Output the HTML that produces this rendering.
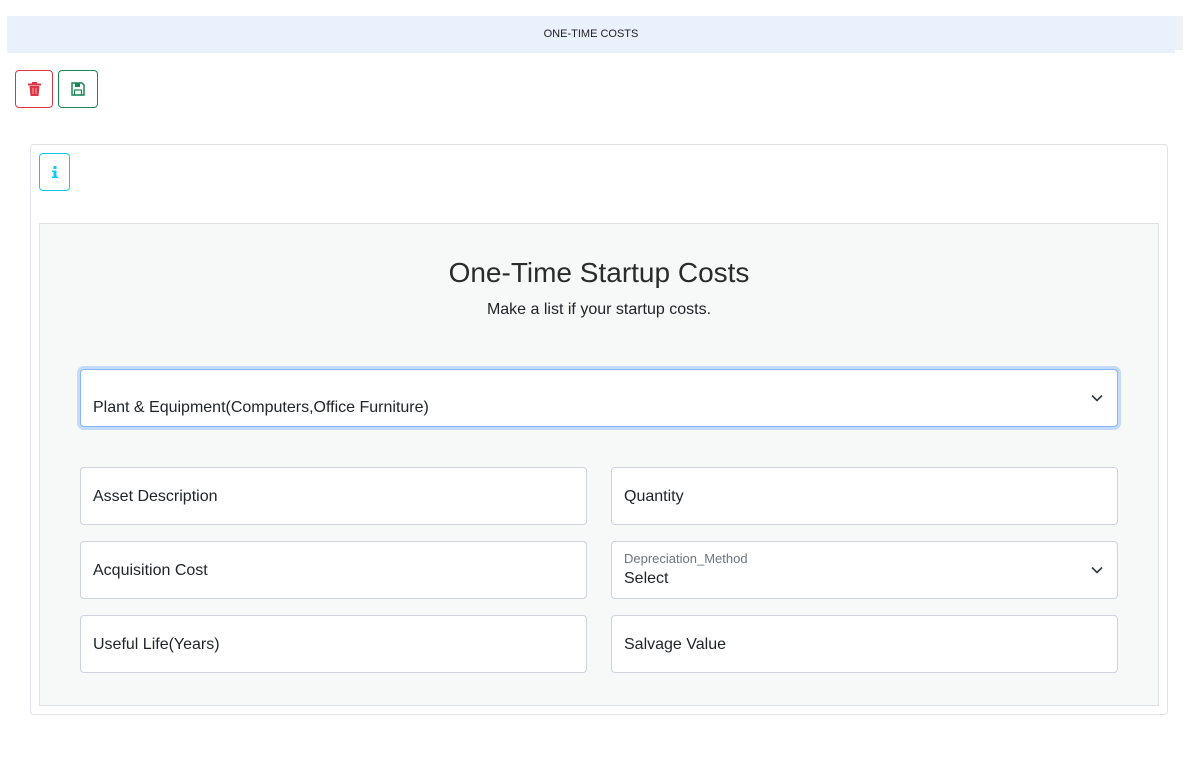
<!DOCTYPE html>
<html><head><style>
*{box-sizing:border-box}
body{margin:0;width:1199px;height:767px;background:#fff;font-family:"Liberation Sans","DejaVu Sans",sans-serif;color:#212529;position:relative;overflow:hidden}
.abs{position:absolute}
.hdr{left:7px;top:16px;width:1168px;height:37px;background:#e9f1fd;font-size:11px;text-align:center;line-height:37px;color:#222}
.gs{left:1175px;top:16px;width:8px;height:34px;background:#f1f1f1}
.btn{border-radius:4px;display:flex;align-items:center;justify-content:center}
.card{left:30px;top:144px;width:1138px;height:571px;border:1px solid #dee2e6;border-radius:4px}
.panel{left:39px;top:223px;width:1120px;height:483px;border:1px solid #dee2e6;background:#f7f8f8}
.f{background:#fff;border:1px solid #ced4da;border-radius:4px;height:58px;font-size:16px;padding-left:12px;line-height:58px}
.chev{position:absolute;right:14px;top:50%;margin-top:-4px}
</style></head><body>
<div class="abs hdr">ONE-TIME COSTS</div>
<div class="abs gs"></div>
<div class="abs btn" style="left:15px;top:70px;width:38px;height:38px;border:1px solid #dc3545">
<svg width="13" height="14" viewBox="0 0 13 14"><rect x="0" y="1.5" width="13" height="2" fill="#dc3545"/><rect x="4" y="0" width="5" height="2" fill="#dc3545"/><path d="M1.5 4h10l-1 10h-8z" fill="#dc3545"/><path d="M5 6v6M8 6v6" stroke="#f3a6ae" stroke-width="1"/></svg></div>
<div class="abs btn" style="left:58px;top:70px;width:40px;height:38px;border:1px solid #198754">
<svg width="14" height="14" viewBox="0 0 14 14"><path d="M1 1h10l2 2v10H1z" fill="none" stroke="#198754" stroke-width="1.5"/><rect x="4" y="1" width="5" height="4" fill="#198754"/><rect x="3.5" y="8" width="7" height="5" fill="none" stroke="#198754" stroke-width="1.2"/></svg></div>
<div class="abs card"></div>
<div class="abs btn" style="left:39px;top:153px;width:31px;height:38px;border:1px solid #0dcaf0">
<svg width="6" height="12" viewBox="0 0 6 12"><rect x="1.5" y="0" width="3" height="3" fill="#0dcaf0"/><path d="M0 4.5h4.5v6H6V12H0v-1.5h1.5v-4.5H0z" fill="#0dcaf0"/></svg></div>
<div class="abs panel"></div>
<div class="abs" style="left:39px;top:257px;width:1120px;text-align:center;font-size:28px;color:#2b2b2b">One-Time Startup Costs</div>
<div class="abs" style="left:39px;top:301px;width:1120px;text-align:center;font-size:16px">Make a list if your startup costs.</div>
<div class="abs f" style="left:80px;top:369px;width:1038px;height:58px;border-color:#86b7fe;box-shadow:0 0 0 3px #c2dbfe;line-height:normal;padding-top:29px">Plant &amp; Equipment(Computers,Office Furniture)
<svg class="chev" width="12" height="8" viewBox="0 0 12 8"><path d="M1 1.5l5 5 5-5" fill="none" stroke="#343a40" stroke-width="1.6"/></svg></div>
<div class="abs f" style="left:80px;top:467px;width:507px">Asset Description</div>
<div class="abs f" style="left:611px;top:467px;width:507px">Quantity</div>
<div class="abs f" style="left:80px;top:541px;width:507px">Acquisition Cost</div>
<div class="abs f" style="left:611px;top:541px;width:507px;line-height:normal">
<div style="font-size:13px;color:#6c757d;margin-top:9px">Depreciation_Method</div><div style="margin-top:4px">Select</div>
<svg class="chev" width="12" height="8" viewBox="0 0 12 8"><path d="M1 1.5l5 5 5-5" fill="none" stroke="#343a40" stroke-width="1.6"/></svg></div>
<div class="abs f" style="left:80px;top:615px;width:507px">Useful Life(Years)</div>
<div class="abs f" style="left:611px;top:615px;width:507px">Salvage Value</div>
</body></html>
